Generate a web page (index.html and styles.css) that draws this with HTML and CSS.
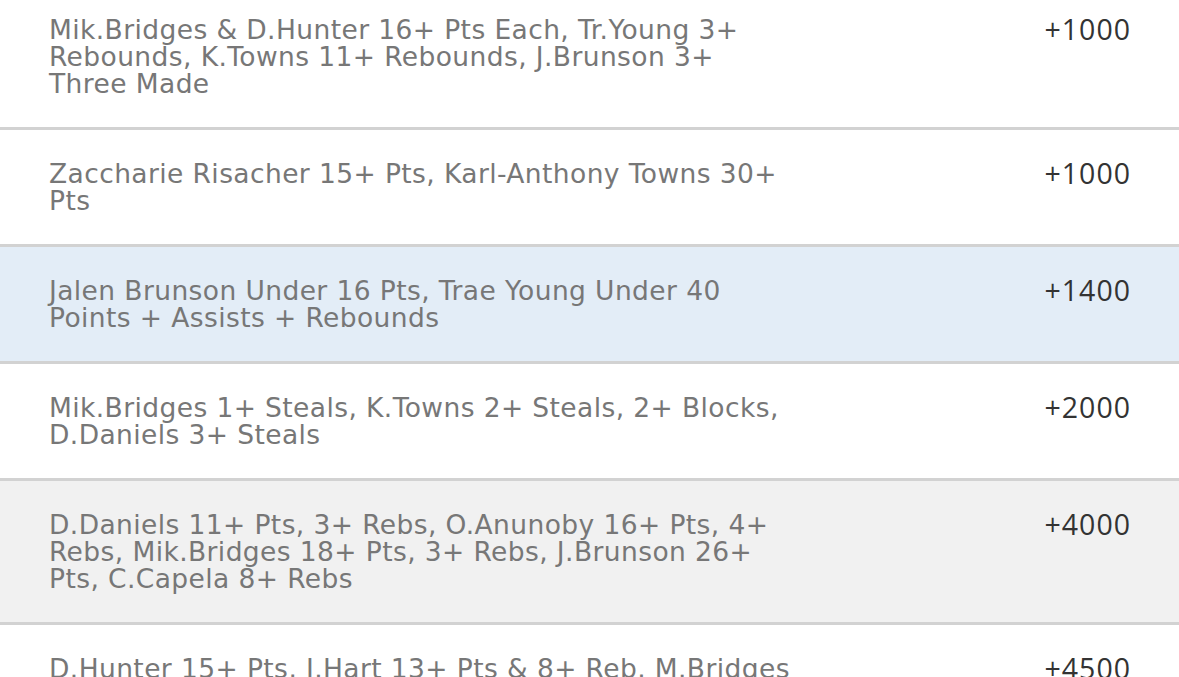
FILE: index.html
```html
<!DOCTYPE html>
<html>
<head>
<meta charset="utf-8">
<link rel="stylesheet" href="styles.css">
</head>
<body>
<div class="list">
  <div class="row">
    <div class="desc">Mik.Bridges &amp; D.Hunter 16+ Pts Each, Tr.Young 3+<br>Rebounds, K.Towns 11+ Rebounds, J.Brunson 3+<br>Three Made</div>
    <div class="odds">+1000</div>
  </div>
  <div class="row">
    <div class="desc">Zaccharie Risacher 15+ Pts, Karl-Anthony Towns 30+<br>Pts</div>
    <div class="odds">+1000</div>
  </div>
  <div class="row row-selected">
    <div class="desc">Jalen Brunson Under 16 Pts, Trae Young Under 40<br>Points + Assists + Rebounds</div>
    <div class="odds">+1400</div>
  </div>
  <div class="row">
    <div class="desc">Mik.Bridges 1+ Steals, K.Towns 2+ Steals, 2+ Blocks,<br>D.Daniels 3+ Steals</div>
    <div class="odds">+2000</div>
  </div>
  <div class="row row-hover">
    <div class="desc">D.Daniels 11+ Pts, 3+ Rebs, O.Anunoby 16+ Pts, 4+<br>Rebs, Mik.Bridges 18+ Pts, 3+ Rebs, J.Brunson 26+<br>Pts, C.Capela 8+ Rebs</div>
    <div class="odds">+4000</div>
  </div>
  <div class="row">
    <div class="desc">D.Hunter 15+ Pts, J.Hart 13+ Pts &amp; 8+ Reb, M.Bridges<br>20+ Pts, K.Towns 10+ Rebs</div>
    <div class="odds">+4500</div>
  </div>
</div>
</body>
</html>
```
FILE: styles.css
```css
html, body {
  margin: 0;
  padding: 0;
  background: #ffffff;
  overflow: hidden;
}
body {
  width: 1179px;
  height: 677px;
  font-family: "Open Sans", "Liberation Sans", sans-serif;
}
.list {
  margin-top: -14px;
  display: flex;
  flex-direction: column;
}
.row {
  display: flex;
  justify-content: space-between;
  align-items: flex-start;
  padding: 30px 49px 30px 49px;
  border-bottom: 3px solid #d2d2d2;
  background: #ffffff;
}
.row-selected {
  background: #e3edf7;
}
.row-hover {
  background: #f1f1f1;
}
.desc {
  font-family: "DejaVu Sans", "Open Sans", sans-serif;
  font-size: 26.5px;
  line-height: 27px;
  letter-spacing: 0.4px;
  color: #777777;
  white-space: nowrap;
}
.odds {
  font-size: 28.5px;
  line-height: 27px;
  letter-spacing: 1px;
  margin-right: -1px;
  color: #333333;
  white-space: nowrap;
}
```
